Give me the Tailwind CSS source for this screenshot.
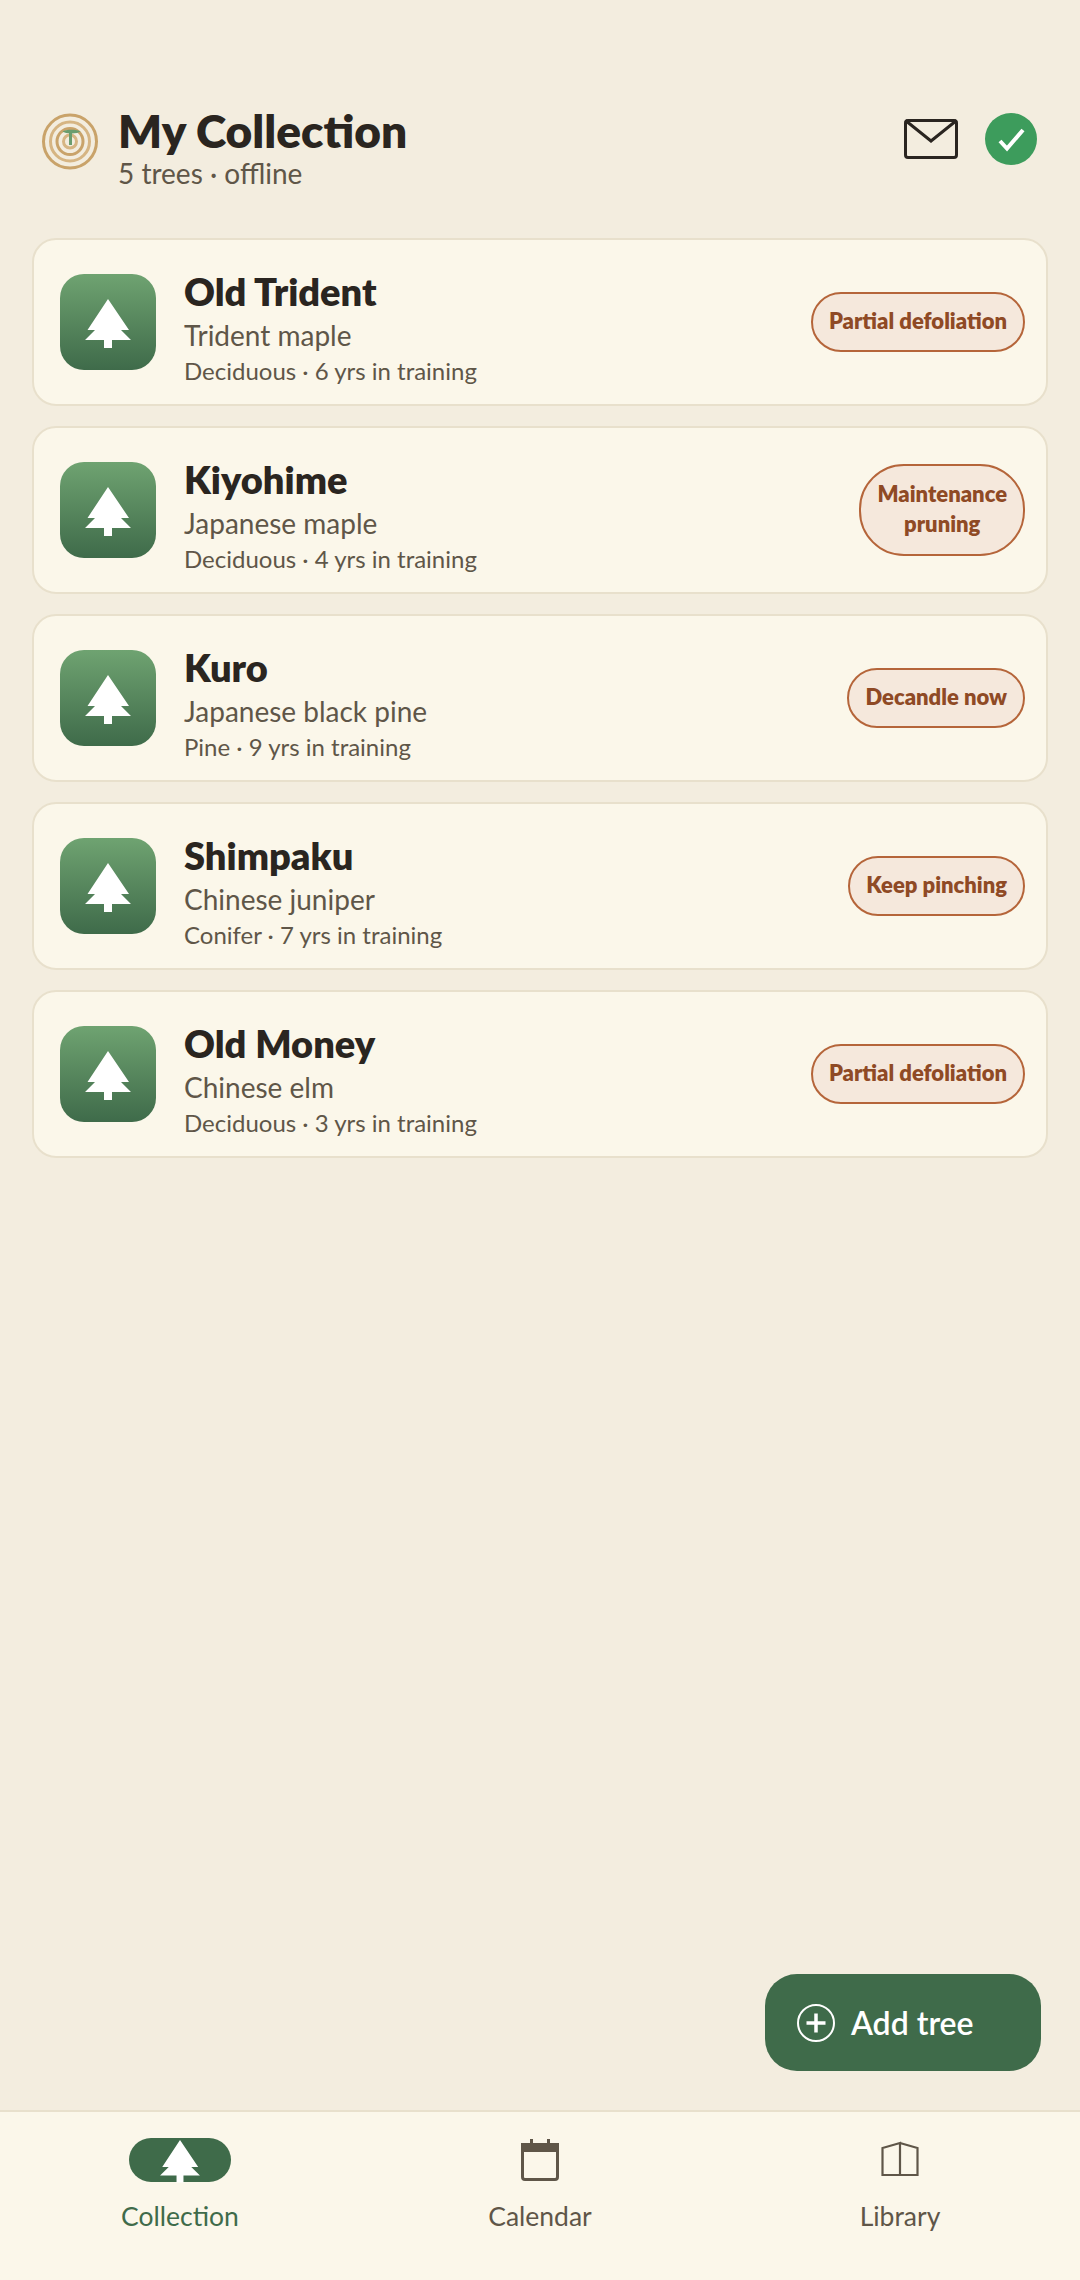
<!DOCTYPE html>
<html lang="en">
<head>
    <meta charset="UTF-8">
    <meta name="viewport" content="width=device-width, initial-scale=1.0">
    <title>My Collection</title>
    <script src="https://cdn.jsdelivr.net/npm/@tailwindcss/browser@4"></script>
</head>
<body class="bg-[#f3eddf] font-['Lato',sans-serif]">
<div class="relative w-[1080px] h-[2280px] flex flex-col overflow-hidden">

    <!-- Header -->
    <header class="h-[238px] pt-[105px] pl-[40px] pr-[43px] flex items-start shrink-0">
        <svg class="w-[60px] h-[60px] mt-[6px] shrink-0" viewBox="0 0 60 60" fill="none">
            <circle cx="30" cy="30.500" r="26.500" stroke="#c9a36a" stroke-width="3"/>
            <circle cx="30" cy="30.500" r="19.500" stroke="#d6b583" stroke-width="3"/>
            <circle cx="30" cy="30.500" r="13" stroke="#c9a36a" stroke-width="3"/>
            <circle cx="30" cy="30.500" r="6.500" stroke="#d6b583" stroke-width="3"/>
            <rect x="29" y="20" width="3" height="14" fill="#6a9d6e"/>
            <path d="M22.500 20.500c3-2.500 15-2.500 18 0c-3 2.500-15 2.500-18 0z" fill="#6a9d6e"/>
        </svg>
        <div class="ml-[18px] flex flex-col">
            <h1 class="text-[46px] leading-[52px] font-extrabold text-[#2a2520]">My Collection</h1>
            <p class="text-[28px] leading-[32px] text-[#5f5648]">5 trees · offline</p>
        </div>
        <div class="ml-auto flex items-center gap-[27px] mt-[8px]">
            <svg class="w-[54px] h-[40px]" viewBox="0 0 54 40" fill="none" stroke="#2a2520" stroke-width="3">
                <rect x="1.500" y="1.500" width="51" height="37" rx="2.500"/>
                <path d="M1.500 1.500L27 22L52.500 1.500"/>
            </svg>
            <div class="w-[52px] h-[52px] rounded-full bg-[#3d9c5c] flex items-center justify-center">
                <svg class="w-[30px] h-[30px]" viewBox="0 0 30 30" fill="none" stroke="#fff" stroke-width="4">
                    <path d="M4 17L11 24.500L27 6"/>
                </svg>
            </div>
        </div>
    </header>

    <!-- Tree list -->
    <main class="px-[32px] flex flex-col gap-[20px]">
        <article class="h-[168px] pl-[26px] pr-[21px] rounded-[24px] border-2 border-[#e8e0cc] bg-[#fbf7ea] flex items-center">
            <div class="w-[96px] h-[96px] rounded-[24px] bg-gradient-to-b from-[#6fa371] to-[#3f6b4a] flex items-center justify-center shrink-0">
                <svg class="w-[60px] h-[60px]" viewBox="0 0 60 60" fill="#fff"><path d="M30 7L51 38H43L53 48H34V56H26V48H7L17 38H9.500z"/></svg>
            </div>
            <div class="ml-[28px] pt-[9px] flex flex-col min-w-0">
                <h2 class="text-[38px] leading-[50px] font-extrabold text-[#2a2520]">Old Trident</h2>
                <p class="text-[28px] leading-[38px] text-[#5f5648]">Trident maple</p>
                <p class="mt-[1px] text-[24px] leading-[32px] text-[#5f5648]">Deciduous · 6 yrs in training</p>
            </div>
            <span class="ml-auto px-[16px] pt-[13px] pb-[15px] rounded-full border-2 border-[#b5653a] bg-[#f5e8dc] text-[#8f4a25] text-[22px] leading-[28px] font-extrabold text-center">Partial defoliation</span>
        </article>

        <article class="h-[168px] pl-[26px] pr-[21px] rounded-[24px] border-2 border-[#e8e0cc] bg-[#fbf7ea] flex items-center">
            <div class="w-[96px] h-[96px] rounded-[24px] bg-gradient-to-b from-[#6fa371] to-[#3f6b4a] flex items-center justify-center shrink-0">
                <svg class="w-[60px] h-[60px]" viewBox="0 0 60 60" fill="#fff"><path d="M30 7L51 38H43L53 48H34V56H26V48H7L17 38H9.500z"/></svg>
            </div>
            <div class="ml-[28px] pt-[9px] flex flex-col min-w-0">
                <h2 class="text-[38px] leading-[50px] font-extrabold text-[#2a2520]">Kiyohime</h2>
                <p class="text-[28px] leading-[38px] text-[#5f5648]">Japanese maple</p>
                <p class="mt-[1px] text-[24px] leading-[32px] text-[#5f5648]">Deciduous · 4 yrs in training</p>
            </div>
            <span class="ml-auto px-[16px] pt-[13px] pb-[15px] rounded-[45px] border-2 border-[#b5653a] bg-[#f5e8dc] text-[#8f4a25] text-[22px] leading-[30px] font-extrabold text-center">Maintenance<br>pruning</span>
        </article>

        <article class="h-[168px] pl-[26px] pr-[21px] rounded-[24px] border-2 border-[#e8e0cc] bg-[#fbf7ea] flex items-center">
            <div class="w-[96px] h-[96px] rounded-[24px] bg-gradient-to-b from-[#6fa371] to-[#3f6b4a] flex items-center justify-center shrink-0">
                <svg class="w-[60px] h-[60px]" viewBox="0 0 60 60" fill="#fff"><path d="M30 7L51 38H43L53 48H34V56H26V48H7L17 38H9.500z"/></svg>
            </div>
            <div class="ml-[28px] pt-[9px] flex flex-col min-w-0">
                <h2 class="text-[38px] leading-[50px] font-extrabold text-[#2a2520]">Kuro</h2>
                <p class="text-[28px] leading-[38px] text-[#5f5648]">Japanese black pine</p>
                <p class="mt-[1px] text-[24px] leading-[32px] text-[#5f5648]">Pine · 9 yrs in training</p>
            </div>
            <span class="ml-auto px-[16px] pt-[13px] pb-[15px] rounded-full border-2 border-[#b5653a] bg-[#f5e8dc] text-[#8f4a25] text-[22px] leading-[28px] font-extrabold text-center">Decandle now</span>
        </article>

        <article class="h-[168px] pl-[26px] pr-[21px] rounded-[24px] border-2 border-[#e8e0cc] bg-[#fbf7ea] flex items-center">
            <div class="w-[96px] h-[96px] rounded-[24px] bg-gradient-to-b from-[#6fa371] to-[#3f6b4a] flex items-center justify-center shrink-0">
                <svg class="w-[60px] h-[60px]" viewBox="0 0 60 60" fill="#fff"><path d="M30 7L51 38H43L53 48H34V56H26V48H7L17 38H9.500z"/></svg>
            </div>
            <div class="ml-[28px] pt-[9px] flex flex-col min-w-0">
                <h2 class="text-[38px] leading-[50px] font-extrabold text-[#2a2520]">Shimpaku</h2>
                <p class="text-[28px] leading-[38px] text-[#5f5648]">Chinese juniper</p>
                <p class="mt-[1px] text-[24px] leading-[32px] text-[#5f5648]">Conifer · 7 yrs in training</p>
            </div>
            <span class="ml-auto px-[16px] pt-[13px] pb-[15px] rounded-full border-2 border-[#b5653a] bg-[#f5e8dc] text-[#8f4a25] text-[22px] leading-[28px] font-extrabold text-center">Keep pinching</span>
        </article>

        <article class="h-[168px] pl-[26px] pr-[21px] rounded-[24px] border-2 border-[#e8e0cc] bg-[#fbf7ea] flex items-center">
            <div class="w-[96px] h-[96px] rounded-[24px] bg-gradient-to-b from-[#6fa371] to-[#3f6b4a] flex items-center justify-center shrink-0">
                <svg class="w-[60px] h-[60px]" viewBox="0 0 60 60" fill="#fff"><path d="M30 7L51 38H43L53 48H34V56H26V48H7L17 38H9.500z"/></svg>
            </div>
            <div class="ml-[28px] pt-[9px] flex flex-col min-w-0">
                <h2 class="text-[38px] leading-[50px] font-extrabold text-[#2a2520]">Old Money</h2>
                <p class="text-[28px] leading-[38px] text-[#5f5648]">Chinese elm</p>
                <p class="mt-[1px] text-[24px] leading-[32px] text-[#5f5648]">Deciduous · 3 yrs in training</p>
            </div>
            <span class="ml-auto px-[16px] pt-[13px] pb-[15px] rounded-full border-2 border-[#b5653a] bg-[#f5e8dc] text-[#8f4a25] text-[22px] leading-[28px] font-extrabold text-center">Partial defoliation</span>
        </article>
    </main>

    <!-- Add tree button -->
    <button class="absolute left-[765px] top-[1974px] w-[276px] h-[97px] pl-[32px] rounded-[32px] bg-[#3f6b4a] text-white flex items-center">
        <svg class="w-[38px] h-[38px]" viewBox="0 0 38 38" fill="none" stroke="#fff">
            <circle cx="19" cy="19" r="18" stroke-width="2"/>
            <path d="M9.500 19h19M19 9.500v19" stroke-width="3.500"/>
        </svg>
        <span class="ml-[16px] text-[32px] leading-[40px] font-semibold">Add tree</span>
    </button>

    <!-- Bottom navigation -->
    <nav class="mt-auto h-[170px] border-t-2 border-[#e8e0cc] bg-[#fbf7ea] grid grid-cols-3 shrink-0">
        <a class="pt-[26px] flex flex-col items-center">
            <div class="w-[102px] h-[44px] rounded-full bg-[#3f6b4a] flex items-center justify-center">
                <svg class="w-[52px] h-[52px] shrink-0" viewBox="0 0 60 60" fill="#fff"><path d="M30 7L51 38H43L53 48H34V56H26V48H7L17 38H9.500z"/></svg>
            </div>
            <span class="mt-[16px] text-[26.500px] leading-[36px] text-[#3f6b4a]">Collection</span>
        </a>
        <a class="pt-[26px] flex flex-col items-center">
            <svg class="w-[38px] h-[44px]" viewBox="0 0 38 44" fill="none">
                <path d="M1.500 10h35v29a2.500 2.500 0 0 1-2.500 2.500H4a2.500 2.500 0 0 1-2.500-2.500z" stroke="#5f5648" stroke-width="3"/>
                <path d="M0 5h9V1h3v4h14V1h3v4h9v9H0z" fill="#5f5648"/>
            </svg>
            <span class="mt-[16px] text-[26.500px] leading-[36px] text-[#5f5648]">Calendar</span>
        </a>
        <a class="pt-[26px] flex flex-col items-center">
            <svg class="w-[38px] h-[44px]" viewBox="0 0 38 44" fill="none" stroke="#5f5648" stroke-width="2.200">
                <path d="M19 5L1.500 10V37H19V5ZM19 5L36.500 10V37H19"/>
            </svg>
            <span class="mt-[16px] text-[26.500px] leading-[36px] text-[#5f5648]">Library</span>
        </a>
    </nav>
</div>
</body>
</html>
